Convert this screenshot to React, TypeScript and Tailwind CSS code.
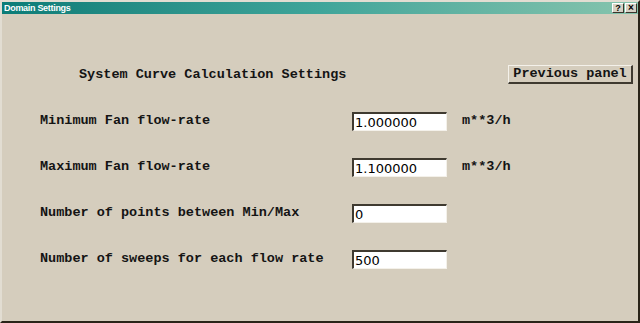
import React from 'react';

const mono = "font-['Liberation_Mono','Courier_New',monospace]";

function Field({ label, value, unit }: { label: string; value: string; unit?: string }) {
  return (
    <div className="flex items-center h-[19px]">
      <div className={`w-[350px] shrink-0 pl-[38px] ${mono} font-bold text-[13.5px] text-[#141414] whitespace-pre`}>
        {label}
      </div>
      <div className="w-[95px] shrink-0 h-[19px] bg-white border-t-2 border-l-2 border-t-[#3f3a30] border-l-[#3f3a30] border-r border-b border-r-[#f4f1ea] border-b-[#f4f1ea] flex items-center pl-[1px] font-['DejaVu_Sans',sans-serif] text-[13px] text-black leading-none">
        {value}
      </div>
      {unit && (
        <div className={`ml-[15px] ${mono} font-bold text-[13.5px] text-[#141414]`}>{unit}</div>
      )}
    </div>
  );
}

export default function App() {
  return (
    <div className="w-[640px] h-[323px] bg-[#d5cdbd] border-t-2 border-l-2 border-t-[#e2ddd2] border-l-[#e2ddd2] border-r-2 border-b-2 border-r-[#2a2419] border-b-[#2a2419] flex flex-col overflow-hidden">
      {/* Title bar */}
      <div className="h-[12px] flex items-center justify-between bg-gradient-to-r from-[#0a7c77] via-[#3fa59a] to-[#86c4ad]">
        <span className="pl-[2px] font-['Liberation_Sans',Arial,sans-serif] font-bold text-[9px] tracking-[-0.3px] leading-none text-white">
          Domain Settings
        </span>
        <div className="flex gap-[1px] pr-[1px]">
          <div className="w-[12px] h-[10px] bg-[#d6d1c4] border-t border-l border-t-white border-l-white border-r border-b border-r-[#3a352b] border-b-[#3a352b] flex items-center justify-center font-['Liberation_Sans',sans-serif] font-bold text-[9px] leading-none text-black">
            ?
          </div>
          <div className="w-[12px] h-[10px] bg-[#d6d1c4] border-t border-l border-t-white border-l-white border-r border-b border-r-[#3a352b] border-b-[#3a352b] flex items-center justify-center font-['Liberation_Sans',sans-serif] font-bold text-[10px] leading-none text-black">
            ×
          </div>
        </div>
      </div>

      {/* Header row */}
      <div className="mt-[51px] flex items-center justify-between h-[19px] pr-[5px]">
        <div className={`pl-[77px] pt-[2px] ${mono} font-bold text-[13.5px] text-[#141414]`}>
          System Curve Calculation Settings
        </div>
        <button className={`w-[125px] h-[19px] bg-[#d5cdbd] border-t border-l border-t-[#f4f1ea] border-l-[#f4f1ea] border-r-2 border-b-2 border-r-[#3f3a30] border-b-[#3f3a30] ${mono} font-bold text-[13.5px] text-[#141414] leading-none`}>
          Previous panel
        </button>
      </div>

      {/* Fields */}
      <div className="mt-[28px] flex flex-col gap-[27px]">
        <Field label="Minimum Fan flow-rate" value="1.000000" unit="m**3/h" />
        <Field label="Maximum Fan flow-rate" value="1.100000" unit="m**3/h" />
        <Field label="Number of points between Min/Max" value="0" />
        <Field label="Number of sweeps for each flow rate" value="500" />
      </div>
    </div>
  );
}
